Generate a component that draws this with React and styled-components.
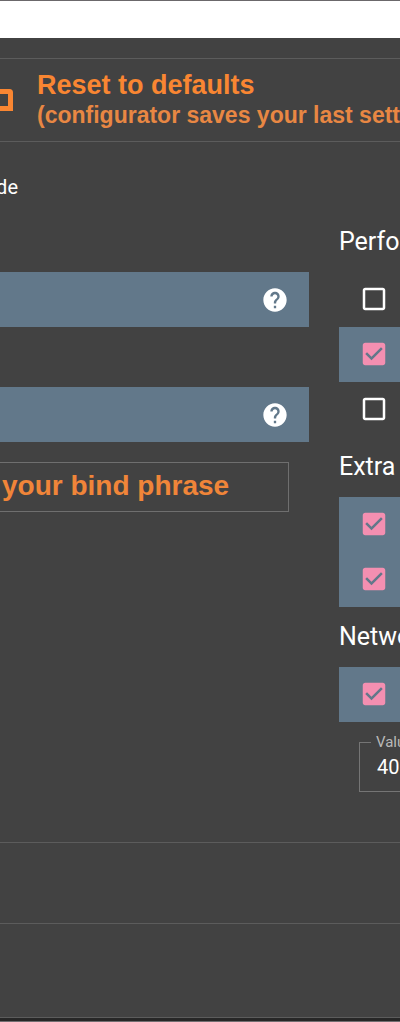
import { useId, useState } from 'react';
import styled, { createGlobalStyle } from 'styled-components';

const GlobalStyle = createGlobalStyle`
  *, *::before, *::after {
    box-sizing: border-box;
  }

  body {
    margin: 0;
    background: #424242;
    color: #fff;
    font-family: Roboto, 'Liberation Sans', sans-serif;
    font-size: 20px;
  }
`;

const Page = styled.div`
  overflow: hidden;
  background: #424242;
`;

const TopBar = styled.header`
  height: 38px;
  border-top: 1px solid #6b686b;
  background: #fff;
`;

const ResetBanner = styled.section`
  display: flex;
  align-items: center;
  gap: 24px;
  margin-top: 20px;
  padding: 11px 0;
  border-top: 1px solid #5c5c5c;
  border-bottom: 1px solid #5c5c5c;
  color: #f98632;
  font-family: 'Liberation Sans', Arial, sans-serif;
  font-weight: 700;
  line-height: 30px;
  white-space: nowrap;
`;

const Marker = styled.svg`
  flex: none;
  width: 13px;
  height: 22px;
`;

const BannerTitle = styled.div`
  font-size: 27px;
`;

const BannerNote = styled.div`
  color: #e88743;
  font-size: 23px;
`;

const ModeLine = styled.div`
  display: flex;
  justify-content: flex-end;
  width: 18px;
  padding: 30px 0 10px;
  line-height: 30px;
`;

const Columns = styled.main`
  display: grid;
  grid-template-columns: minmax(0, 1fr) 61px;
  column-gap: 30px;
  padding-bottom: 50px;
`;

const MainColumn = styled.div`
  display: flex;
  flex-direction: column;
  padding-top: 60px;
`;

const Panel = styled.div`
  display: flex;
  align-items: center;
  justify-content: flex-end;
  height: 55px;
  padding: 1px 20px 0;
  background: #62788a;

  & + & {
    margin-top: 60px;
  }
`;

const HelpButton = styled.button`
  display: flex;
  padding: 0;
  border: 0;
  background: none;
  color: #fff;
  cursor: pointer;

  svg {
    width: 28px;
    height: 28px;
  }
`;

const PhraseInput = styled.input`
  align-self: stretch;
  height: 50px;
  margin: 20px 20px 0 0;
  padding: 0 12px 2px 2px;
  border: 1px solid #6f6f6f;
  border-left: 0;
  border-radius: 0;
  outline: 0;
  background: transparent;
  color: #f08539;
  font: 700 28px 'Liberation Sans', Arial, sans-serif;
`;

const SideColumn = styled.div`
  min-width: 0;
  overflow: hidden;
  white-space: nowrap;
`;

const GroupTitle = styled.h2`
  margin: 0;
  font-size: 25px;
  font-weight: 400;
  line-height: 60px;
`;

const OptionRow = styled.label`
  display: flex;
  align-items: center;
  height: 55px;
  padding: 0 0 1px 20px;
  background: ${p => (p.$checked ? '#62788a' : 'transparent')};
  color: ${p => (p.$checked ? '#f48fb1' : '#fff')};
  cursor: pointer;

  svg {
    flex: none;
    width: 30px;
    height: 30px;
  }
`;

/* The native box stays focusable; the icon next to it is what shows. */
const HiddenCheckbox = styled.input`
  position: absolute;
  width: 30px;
  height: 30px;
  margin: 0;
  opacity: 0;
`;

const ValueField = styled.fieldset`
  min-width: 0;
  margin: 12px 0 0 20px;
  padding: 0 0 8px;
  border: 1px solid #757575;
  border-right: 0;
`;

const ValueLegend = styled.legend`
  margin-left: 11px;
  padding: 0 0 0 5px;
  color: #b9b9b9;
  font-size: 15px;
  line-height: 17px;
`;

const ValueInput = styled.input`
  display: block;
  width: 100%;
  height: 32px;
  padding: 0 0 0 17px;
  border: 0;
  outline: 0;
  background: transparent;
  color: #fff;
  font: 400 20px Roboto, 'Liberation Sans', sans-serif;
`;

const FooterSection = styled.div`
  height: ${p => p.$height}px;
  border-top: 1px solid #5c5c5c;
`;

const WindowEdge = styled.footer`
  height: 5px;
  border-top: 1px solid #5c5c5c;
  border-bottom: 1px solid #716e71;
  background: #272727;
`;

function Help({ label }) {
  return (
    <HelpButton type="button" aria-label={label}>
      <svg viewBox="0 0 24 24" fill="currentColor" aria-hidden="true">
        <path d="M12 2C6.48 2 2 6.48 2 12s4.48 10 10 10 10-4.480 10-10S17.520 2 12 2zm1 17h-2v-2h2v2zm2.070-7.750l-.9.920C13.450 12.900 13 13.500 13 15h-2v-.5c0-1.100.450-2.100 1.170-2.830l1.240-1.260c.370-.360.590-.860.590-1.410 0-1.100-.9-2-2-2s-2 .9-2 2H8c0-2.210 1.790-4 4-4s4 1.790 4 4c0 .880-.360 1.680-.930 2.250z" />
      </svg>
    </HelpButton>
  );
}

function Option({ label, defaultChecked = false }) {
  const [checked, setChecked] = useState(defaultChecked);

  return (
    <OptionRow $checked={checked}>
      <HiddenCheckbox
        type="checkbox"
        aria-label={label}
        checked={checked}
        onChange={e => setChecked(e.target.checked)}
      />
      <svg viewBox="0 0 24 24" fill="currentColor" aria-hidden="true">
        {checked ? (
          <path d="M19 3H5c-1.110 0-2 .9-2 2v14c0 1.100.890 2 2 2h14c1.110 0 2-.9 2-2V5c0-1.100-.890-2-2-2zm-9 14l-5-5 1.410-1.410L10 14.170l7.590-7.590L19 8l-9 9z" />
        ) : (
          <path d="M19 5v14H5V5h14m0-2H5c-1.100 0-2 .9-2 2v14c0 1.100.9 2 2 2h14c1.100 0 2-.9 2-2V5c0-1.100-.9-2-2-2z" />
        )}
      </svg>
    </OptionRow>
  );
}

export default function App() {
  const valueId = useId();

  return (
    <Page>
      <GlobalStyle />
      <TopBar />

      <ResetBanner>
        <Marker viewBox="0 0 13 22" aria-hidden="true">
          <path
            d="M0 2.500H9.500Q10.500 2.500 10.500 3.500V19.500H0"
            fill="none"
            stroke="currentColor"
            strokeWidth="5"
          />
        </Marker>
        <div>
          <BannerTitle>Reset to defaults</BannerTitle>
          <BannerNote>(configurator saves your last sett</BannerNote>
        </div>
      </ResetBanner>

      <ModeLine>de</ModeLine>

      <Columns>
        <MainColumn>
          <Panel>
            <Help label="Help" />
          </Panel>
          <Panel>
            <Help label="Bind phrase help" />
          </Panel>
          <PhraseInput aria-label="Bind phrase" defaultValue="your bind phrase" />
        </MainColumn>

        <SideColumn>
          <GroupTitle>Perfo</GroupTitle>
          <Option label="Performance option 1" />
          <Option label="Performance option 2" defaultChecked />
          <Option label="Performance option 3" />

          <GroupTitle>Extra</GroupTitle>
          <Option label="Extra option 1" defaultChecked />
          <Option label="Extra option 2" defaultChecked />

          <GroupTitle>Netwo</GroupTitle>
          <Option label="Network option" defaultChecked />
          <ValueField>
            <ValueLegend>
              <label htmlFor={valueId}>Valu</label>
            </ValueLegend>
            <ValueInput id={valueId} inputMode="numeric" defaultValue="40" />
          </ValueField>
        </SideColumn>
      </Columns>

      <FooterSection $height={81} />
      <FooterSection $height={94} />
      <WindowEdge />
    </Page>
  );
}
